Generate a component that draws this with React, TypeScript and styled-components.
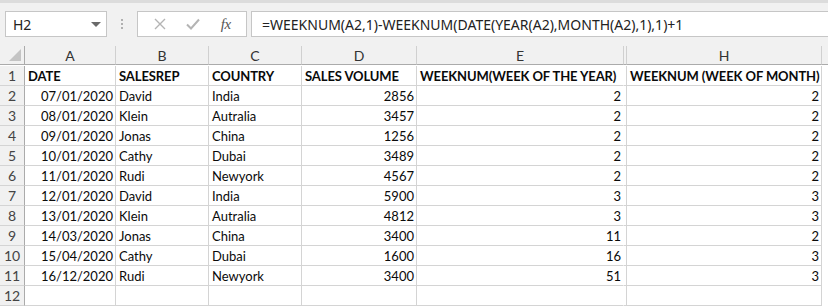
import React from "react";
import styled, { createGlobalStyle } from "styled-components";

const Global = createGlobalStyle`
  html, body { margin: 0; padding: 0; background: #ffffff; }
  body { font-family: Lato, "Liberation Sans", sans-serif; overflow: hidden; }
`;

const Page = styled.div`
  width: 828px;
  height: 306px;
  display: flex;
  flex-direction: column;
  background: #ffffff;
  overflow: hidden;
`;

const Toolbar = styled.div`
  height: 47px;
  box-sizing: border-box;
  background: #f1f1f1;
  border-top: 3px solid #dcdcdc;
  display: flex;
  align-items: flex-start;
  padding: 8px 0 0 5px;
`;

const NameBox = styled.div`
  width: 102px;
  height: 26px;
  box-sizing: border-box;
  background: #ffffff;
  border: 1px solid #c6c6c6;
  display: flex;
  align-items: center;
  justify-content: space-between;
  padding: 0 5px 0 7px;
  font-family: "Segoe UI", "Noto Sans", sans-serif;
  font-size: 14px;
  color: #222;
`;

const Caret = styled.span`
  width: 0;
  height: 0;
  border-left: 5px solid transparent;
  border-right: 5px solid transparent;
  border-top: 5px solid #6a6a6a;
`;

const Grip = styled.div`
  width: 30px;
  height: 26px;
  display: flex;
  flex-direction: column;
  align-items: center;
  justify-content: center;
  gap: 2px;
`;

const Dot = styled.span`
  width: 2px;
  height: 2px;
  background: #b0b0b0;
`;

const ButtonBox = styled.div`
  width: 110px;
  height: 26px;
  box-sizing: border-box;
  background: #ffffff;
  border: 1px solid #c6c6c6;
  display: flex;
  align-items: center;
  justify-content: space-around;
  padding: 0 4px 0 6px;
`;

const IconButton = styled.span`
  width: 26px;
  display: flex;
  align-items: center;
  justify-content: center;
`;

const Fx = styled.span`
  font-family: "Liberation Serif", serif;
  font-style: italic;
  font-size: 15px;
  color: #555;
  letter-spacing: -0.5px;
`;

const FormulaInput = styled.div`
  flex: 1;
  margin-left: 4px;
  height: 26px;
  box-sizing: border-box;
  background: #ffffff;
  border: 1px solid #c6c6c6;
  border-right: none;
  display: flex;
  align-items: center;
  padding-left: 10px;
  font-family: "Segoe UI", "Noto Sans", sans-serif;
  font-size: 14px;
  color: #222;
  white-space: nowrap;
`;

const cols = "25px 91px 93px 93px 115px 207px 3px 195px 6px";

const Grid = styled.div`
  display: grid;
  grid-template-columns: ${cols};
  grid-auto-rows: 20px;
  font-family: Lato, "Liberation Sans", sans-serif;
  font-size: 13px;
  color: #0a0a0a;
`;

const ColHead = styled.div`
  height: 19px;
  box-sizing: border-box;
  background: #f1f1f1;
  border-right: 1px solid #d0d0d0;
  border-bottom: 1px solid #ababab;
  display: flex;
  align-items: center;
  justify-content: center;
  font-size: 14px;
  color: #333;
  position: relative;
`;

const Corner = styled(ColHead)`
  border-right: 1px solid #ababab;
`;

const Triangle = styled.span`
  position: absolute;
  right: 3px;
  bottom: 3px;
  width: 0;
  height: 0;
  border-left: 12px solid transparent;
  border-bottom: 12px solid #c4c4c4;
`;

const RowHead = styled.div`
  box-sizing: border-box;
  background: #f1f1f1;
  border-right: 1px solid #ababab;
  border-bottom: 1px solid #d4d4d4;
  display: flex;
  align-items: center;
  justify-content: center;
  font-size: 14px;
  color: #444;
`;

const Cell = styled.div<{ $align?: "left" | "right"; $bold?: boolean; $noRight?: boolean }>`
  box-sizing: border-box;
  border-right: 1px solid ${(p) => (p.$noRight ? "transparent" : "#d4d4d4")};
  border-bottom: 1px solid #d4d4d4;
  display: flex;
  align-items: center;
  justify-content: ${(p) => (p.$align === "right" ? "flex-end" : "flex-start")};
  padding: 1px 2px 0 3px;
  font-weight: ${(p) => (p.$bold ? 700 : 400)};
  letter-spacing: ${(p) => (p.$bold ? "-0.1px" : "0")};
  white-space: nowrap;
  overflow: hidden;
`;

const Hidden = styled.div`
  box-sizing: border-box;
  border-right: 1px solid #d4d4d4;
  border-bottom: 1px solid #d4d4d4;
`;

const HiddenHead = styled(ColHead)``;

const Tail = styled.div``;

const TailHead = styled.div`
  height: 19px;
  background: #f1f1f1;
  border-bottom: 1px solid #ababab;
  box-sizing: border-box;
`;

const rows: [string, string, string, string, string, string][] = [
  ["07/01/2020", "David", "India", "2856", "2", "2"],
  ["08/01/2020", "Klein", "Autralia", "3457", "2", "2"],
  ["09/01/2020", "Jonas", "China", "1256", "2", "2"],
  ["10/01/2020", "Cathy", "Dubai", "3489", "2", "2"],
  ["11/01/2020", "Rudi", "Newyork", "4567", "2", "2"],
  ["12/01/2020", "David", "India", "5900", "3", "3"],
  ["13/01/2020", "Klein", "Autralia", "4812", "3", "3"],
  ["14/03/2020", "Jonas", "China", "3400", "11", "2"],
  ["15/04/2020", "Cathy", "Dubai", "1600", "16", "3"],
  ["16/12/2020", "Rudi", "Newyork", "3400", "51", "3"],
];

export default function App() {
  return (
    <Page>
      <Global />
      <Toolbar>
        <NameBox>
          H2
          <Caret />
        </NameBox>
        <Grip>
          <Dot />
          <Dot />
          <Dot />
        </Grip>
        <ButtonBox>
          <IconButton>
            <svg width="12" height="12" viewBox="0 0 12 12">
              <path d="M1 1 L11 11 M11 1 L1 11" stroke="#b4b4b4" strokeWidth="1.4" fill="none" />
            </svg>
          </IconButton>
          <IconButton>
            <svg width="14" height="12" viewBox="0 0 14 12">
              <path d="M1 6.5 L5 10.5 L13 1.5" stroke="#b4b4b4" strokeWidth="2" fill="none" />
            </svg>
          </IconButton>
          <IconButton>
            <Fx>fx</Fx>
          </IconButton>
        </ButtonBox>
        <FormulaInput>=WEEKNUM(A2,1)-WEEKNUM(DATE(YEAR(A2),MONTH(A2),1),1)+1</FormulaInput>
      </Toolbar>
      <Grid>
        <Corner>
          <Triangle />
        </Corner>
        <ColHead>A</ColHead>
        <ColHead>B</ColHead>
        <ColHead>C</ColHead>
        <ColHead>D</ColHead>
        <ColHead>E</ColHead>
        <HiddenHead />
        <ColHead>H</ColHead>
        <TailHead />

        <RowHead>1</RowHead>
        <Cell $bold>DATE</Cell>
        <Cell $bold>SALESREP</Cell>
        <Cell $bold>COUNTRY</Cell>
        <Cell $bold>SALES VOLUME</Cell>
        <Cell $bold $noRight>WEEKNUM(WEEK OF THE YEAR)</Cell>
        <Hidden />
        <Cell $bold>WEEKNUM (WEEK OF MONTH)</Cell>
        <Tail />

        {rows.map((r, i) => (
          <React.Fragment key={i}>
            <RowHead>{i + 2}</RowHead>
            <Cell $align="right">{r[0]}</Cell>
            <Cell>{r[1]}</Cell>
            <Cell>{r[2]}</Cell>
            <Cell $align="right">{r[3]}</Cell>
            <Cell $align="right" $noRight>{r[4]}</Cell>
            <Hidden />
            <Cell $align="right">{r[5]}</Cell>
            <Tail />
          </React.Fragment>
        ))}

        <RowHead>12</RowHead>
        <Cell />
        <Cell />
        <Cell />
        <Cell />
        <Cell $noRight />
        <Hidden />
        <Cell />
        <Tail />
      </Grid>
    </Page>
  );
}
